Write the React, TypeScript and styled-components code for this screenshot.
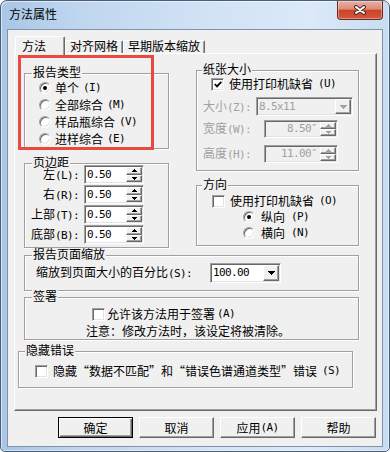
import React from 'react'
import styled, { createGlobalStyle } from 'styled-components'

const GlobalStyle = createGlobalStyle`
  html, body {
    margin: 0;
    padding: 0;
    background: #fff;
  }
  body {
    font-family: 'Noto Sans CJK SC', sans-serif;
    font-size: 12px;
    line-height: 14px;
    color: #000;
  }
  *, *::before, *::after {
    box-sizing: border-box;
  }
`

// ascii runs are set in a narrow mono face, like the half-width glyphs of SimSun
const Latin = styled.span`
  font-family: 'DejaVu Sans Mono', 'Liberation Mono', monospace;
  font-size: 11px;
  letter-spacing: -0.62px;
`

const LATIN_RUN = /([\x20-\x7E\u2033]+)/

function Txt({ s }: { s: string }) {
  return (
    <>
      {s.split(LATIN_RUN).map((part, i) =>
        part === '' ? null : i % 2 ? (
          <Latin key={i}>{part}</Latin>
        ) : (
          <React.Fragment key={i}>{part}</React.Fragment>
        )
      )}
    </>
  )
}

const Window = styled.div`
  width: 390px;
  height: 452px;
  display: flex;
  flex-direction: column;
  border: 1px solid #4a5e77;
  border-radius: 7px 7px 5px 5px;
  background: linear-gradient(90deg, #a9c6e6 0%, #bfd6ef 20%, #d2e3f5 55%, #dbe9f8 80%, #c8dcf1 100%);
  box-shadow: inset 1px 1px 0 rgba(255, 255, 255, 0.55), inset -1px -1px 0 rgba(255, 255, 255, 0.45);
  overflow: hidden;
`

const TitleBar = styled.div`
  height: 28px;
  display: flex;
  align-items: flex-start;
  padding-left: 8px;
`

const Title = styled.div`
  margin-top: 6px;
`

const CloseButton = styled.div`
  margin-left: auto;
  margin-right: 6px;
  width: 46px;
  height: 19px;
  border: 1px solid #6b2a21;
  border-top: 0;
  border-radius: 0 0 4px 4px;
  background: linear-gradient(180deg, #eab0a2 0%, #de8a76 45%, #c9442a 52%, #d3593b 100%);
  box-shadow: inset 0 0 0 1px rgba(255, 255, 255, 0.35);
  display: flex;
  align-items: center;
  justify-content: center;
`

const Client = styled.div`
  flex: 1;
  margin: 0 6px 4px;
  border: 1px solid #7f93ad;
  background: #f0f0f0;
  padding: 6px 5px 0 6px;
  display: flex;
  flex-direction: column;
`

const TabStrip = styled.div`
  display: flex;
  align-items: flex-end;
  height: 17px;
  padding-left: 1px;
  position: relative;
  z-index: 1;
`

const Tab = styled.div<{ $active?: boolean }>`
  height: ${p => (p.$active ? 19 : 13)}px;
  margin-bottom: ${p => (p.$active ? -2 : 0)}px;
  min-width: ${p => (p.$active ? 50 : 0)}px;
  padding: 0 ${p => (p.$active ? 6 : 4)}px;
  border: 1px solid;
  border-color: #fff #696969 transparent #fff;
  border-bottom: 0;
  border-radius: 2px 2px 0 0;
  box-shadow: inset -1px 0 0 #a0a0a0;
  background: #f0f0f0;
  display: flex;
  align-items: ${p => (p.$active ? 'center' : 'flex-end')};
  white-space: nowrap;
`

const Panel = styled.div`
  position: relative;
  height: 358px;
  border: 1px solid;
  border-color: #fff #696969 #696969 #fff;
  box-shadow: inset -1px -1px 0 #a0a0a0;
  display: flex;
  flex-direction: column;
  align-items: flex-start;
`

const Highlight = styled.div`
  position: absolute;
  left: 3px;
  top: 1px;
  width: 136px;
  height: 95px;
  border: 3px solid #e84a40;
  pointer-events: none;
`

const TopRow = styled.div`
  display: flex;
  gap: 27px;
  padding-left: 9px;
`

const Column = styled.div<{ $top: number; $w: number }>`
  display: flex;
  flex-direction: column;
  gap: 14px;
  width: ${p => p.$w}px;
  padding-top: ${p => p.$top}px;
`

const Group = styled.div`
  position: relative;
  flex: none;
  border: 1px solid #a0a0a0;
  box-shadow: inset 1px 1px 0 #fff, 1px 1px 0 #fff;
  display: flex;
  flex-direction: column;
  align-items: flex-start;
`

const Legend = styled.span<{ $x: number }>`
  position: absolute;
  top: -8px;
  left: ${p => p.$x}px;
  padding: 0 1px;
  line-height: 11px;
  background: #f0f0f0;
  white-space: nowrap;
`

const TypeGroup = styled(Group)`
  height: 76px;
  padding: 5px 0 0 14px;
`

const MarginGroup = styled(Group)`
  height: 85px;
`

const PaperGroup = styled(Group)`
  height: 101px;
`

const DirGroup = styled(Group)`
  height: 61px;
`

const WideGroup = styled(Group)<{ $h: number; $mt: number; $ml: number }>`
  width: 335px;
  height: ${p => p.$h}px;
  margin: ${p => p.$mt}px 0 0 ${p => p.$ml}px;
`

const Line = styled.div<{ $h?: number; $pl?: number; $mt?: number; $gap?: number }>`
  display: flex;
  align-items: center;
  height: ${p => p.$h ?? 14}px;
  padding-left: ${p => p.$pl ?? 0}px;
  margin-top: ${p => p.$mt ?? 0}px;
  gap: ${p => p.$gap ?? 0}px;
  white-space: nowrap;
`

const FieldLabel = styled.span<{ $w: number; $right?: boolean; $disabled?: boolean }>`
  width: ${p => p.$w}px;
  flex: none;
  line-height: 12px;
  text-align: ${p => (p.$right ? 'right' : 'left')};
  padding-right: ${p => (p.$right ? 5 : 0)}px;
  color: ${p => (p.$disabled ? '#a0a0a0' : '#000')};
`

const RadioDot = styled.span<{ $on?: boolean }>`
  flex: none;
  width: 12px;
  height: 12px;
  border-radius: 50%;
  background: #fff;
  border: 1px solid;
  border-color: #a0a0a0 #fff #fff #a0a0a0;
  box-shadow: inset 1px 1px 0 #696969, inset -1px -1px 0 #e3e3e3;
  display: flex;
  align-items: center;
  justify-content: center;
  &::after {
    content: '';
    display: ${p => (p.$on ? 'block' : 'none')};
    width: 4px;
    height: 4px;
    border-radius: 50%;
    background: #000;
  }
`

const CheckBox = styled.span`
  flex: none;
  width: 13px;
  height: 13px;
  background: #fff;
  border: 1px solid;
  border-color: #a0a0a0 #fff #fff #a0a0a0;
  box-shadow: inset 1px 1px 0 #696969, inset -1px -1px 0 #e3e3e3;
  display: flex;
  align-items: center;
  justify-content: center;
`

const Sunken = styled.div<{ $w: number; $h: number; $disabled?: boolean }>`
  flex: none;
  display: flex;
  width: ${p => p.$w}px;
  height: ${p => p.$h}px;
  padding: 1px;
  border: 1px solid;
  border-color: #a0a0a0 #fff #fff #a0a0a0;
  box-shadow: inset 1px 1px 0 #696969, inset -1px -1px 0 #e3e3e3;
  background: ${p => (p.$disabled ? '#f0f0f0' : '#fff')};
`

const FieldText = styled.div<{ $right?: boolean; $disabled?: boolean }>`
  flex: 1;
  display: flex;
  align-items: center;
  justify-content: ${p => (p.$right ? 'flex-end' : 'flex-start')};
  padding: 0 ${p => (p.$right ? 3 : 0)}px 0 1px;
  color: ${p => (p.$disabled ? '#a0a0a0' : '#000')};
`

const Spinner = styled.div`
  width: 16px;
  display: flex;
  flex-direction: column;
`

const Raised = styled.div`
  flex: 1;
  display: flex;
  align-items: center;
  justify-content: center;
  background: #f0f0f0;
  border: 1px solid;
  border-color: #fff #696969 #696969 #fff;
  box-shadow: inset -1px -1px 0 #a0a0a0;
`

const DropButton = styled(Raised)`
  flex: none;
  width: 16px;
`

const Arrow = ({ up, w, h, color }: { up?: boolean; w: number; h: number; color: string }) => (
  <svg width={w} height={h} viewBox={`0 0 ${w} ${h}`} shapeRendering='crispEdges'>
    <polygon points={up ? `0,${h} ${w},${h} ${w / 2},0` : `0,0 ${w},0 ${w / 2},${h}`} fill={color} />
  </svg>
)

function SpinBox({ value, w, h, disabled }: { value: string; w: number; h: number; disabled?: boolean }) {
  const c = disabled ? '#a0a0a0' : '#000'
  return (
    <Sunken $w={w} $h={h} $disabled={disabled}>
      <FieldText $right={disabled} $disabled={disabled}>
        <Txt s={value} />
      </FieldText>
      <Spinner>
        <Raised>
          <Arrow up w={5} h={3} color={c} />
        </Raised>
        <Raised>
          <Arrow w={5} h={3} color={c} />
        </Raised>
      </Spinner>
    </Sunken>
  )
}

function Combo({ value, w, h, disabled }: { value: string; w: number; h: number; disabled?: boolean }) {
  return (
    <Sunken $w={w} $h={h} $disabled={disabled}>
      <FieldText $disabled={disabled}>
        <Txt s={value} />
      </FieldText>
      <DropButton>
        <Arrow w={7} h={4} color={disabled ? '#a0a0a0' : '#000'} />
      </DropButton>
    </Sunken>
  )
}

const Tick = () => (
  <svg width='8' height='7' viewBox='0 0 8 7'>
    <path d='M0.8 3 L3 5.4 L7.3 0.8' stroke='#000' strokeWidth='1.8' fill='none' />
  </svg>
)

const ButtonRow = styled.div`
  display: flex;
  justify-content: flex-end;
  gap: 6px;
  margin-top: 6px;
  padding-right: 1px;
`

const Button = styled.div<{ $default?: boolean }>`
  width: 75px;
  height: 21px;
  display: flex;
  align-items: center;
  justify-content: center;
  background: #f0f0f0;
  border: 1px solid;
  border-color: ${p => (p.$default ? '#000' : '#fff #696969 #696969 #fff')};
  box-shadow: ${p =>
    p.$default
      ? 'inset 1px 1px 0 #fff, inset -1px -1px 0 #696969, inset -2px -2px 0 #a0a0a0'
      : 'inset -1px -1px 0 #a0a0a0'};
`

const margins = ['左(L):', '右(R):', '上部(T):', '底部(B):']
const reportTypes = ['单个(I)', '全部综合(M)', '样品瓶综合(V)', '进样综合(E)']

export default function App() {
  return (
    <>
      <GlobalStyle />
      <Window>
        <TitleBar>
          <Title>方法属性</Title>
          <CloseButton>
            <svg width='14' height='10' viewBox='0 0 14 10'>
              <path d='M3 2 L11 8 M11 2 L3 8' stroke='#4a2a26' strokeWidth='4' strokeLinecap='round' />
              <path d='M3 2 L11 8 M11 2 L3 8' stroke='#fff' strokeWidth='2' strokeLinecap='round' />
            </svg>
          </CloseButton>
        </TitleBar>
        <Client>
          <TabStrip>
            <Tab $active>方法</Tab>
            <Tab>对齐网格</Tab>
            <Tab>早期版本缩放</Tab>
          </TabStrip>
          <Panel>
            <TopRow>
              <Column $top={19} $w={145}>
                <TypeGroup>
                  <Legend $x={7}>报告类型</Legend>
                  {reportTypes.map((t, i) => (
                    <Line key={t} $h={17} $gap={4}>
                      <RadioDot $on={i === 0} />
                      <Txt s={t} />
                    </Line>
                  ))}
                </TypeGroup>
                <MarginGroup>
                  <Legend $x={7}>页边距</Legend>
                  {margins.map(m => (
                    <Line key={m} $h={19} $mt={1}>
                      <FieldLabel $w={59} $right>
                        <Txt s={m} />
                      </FieldLabel>
                      <SpinBox value='0.50' w={60} h={19} />
                    </Line>
                  ))}
                </MarginGroup>
              </Column>
              <Column $top={16} $w={163}>
                <PaperGroup>
                  <Legend $x={5}>纸张大小</Legend>
                  <Line $mt={6} $pl={14} $gap={5}>
                    <CheckBox>
                      <Tick />
                    </CheckBox>
                    <Txt s='使用打印机缺省(U)' />
                  </Line>
                  <Line $h={19} $mt={6} $pl={6}>
                    <FieldLabel $w={53} $disabled>
                      <Txt s='大小(Z):' />
                    </FieldLabel>
                    <Combo value='8.5x11' w={97} h={19} disabled />
                  </Line>
                  <Line $h={18} $mt={4} $pl={6}>
                    <FieldLabel $w={61} $disabled>
                      <Txt s='宽度(W):' />
                    </FieldLabel>
                    <SpinBox value='8.50″' w={74} h={18} disabled />
                  </Line>
                  <Line $h={18} $mt={7} $pl={6}>
                    <FieldLabel $w={61} $disabled>
                      <Txt s='高度(H):' />
                    </FieldLabel>
                    <SpinBox value='11.00″' w={74} h={18} disabled />
                  </Line>
                </PaperGroup>
                <DirGroup>
                  <Legend $x={5}>方向</Legend>
                  <Line $mt={8} $pl={15} $gap={5}>
                    <CheckBox />
                    <Txt s='使用打印机缺省(O)' />
                  </Line>
                  <Line $h={16} $mt={1} $pl={46} $gap={6}>
                    <RadioDot $on />
                    <Txt s='纵向(P)' />
                  </Line>
                  <Line $h={16} $pl={46} $gap={6}>
                    <RadioDot />
                    <Txt s='横向(N)' />
                  </Line>
                </DirGroup>
              </Column>
            </TopRow>

            <WideGroup $h={36} $mt={7} $ml={9}>
              <Legend $x={7}>报告页面缩放</Legend>
              <Line $h={20} $mt={7} $pl={11}>
                <FieldLabel $w={174}>
                  <Txt s='缩放到页面大小的百分比(S):' />
                </FieldLabel>
                <Combo value='100.00' w={71} h={20} />
              </Line>
            </WideGroup>

            <WideGroup $h={43} $mt={6} $ml={9}>
              <Legend $x={7}>签署</Legend>
              <Line $mt={9} $pl={67} $gap={2}>
                <CheckBox />
                <Txt s='允许该方法用于签署(A)' />
              </Line>
              <Line $mt={3} $pl={61}>
                注意：修改方法时，该设定将被清除。
              </Line>
            </WideGroup>

            <WideGroup $h={37} $mt={11} $ml={3}>
              <Legend $x={6}>隐藏错误</Legend>
              <Line $mt={12} $pl={16} $gap={5}>
                <CheckBox />
                <Txt s='隐藏“数据不匹配”和“错误色谱通道类型”错误(S)' />
              </Line>
            </WideGroup>

            <Highlight />
          </Panel>
          <ButtonRow>
            <Button $default>确定</Button>
            <Button>取消</Button>
            <Button>
              <Txt s='应用(A)' />
            </Button>
            <Button>帮助</Button>
          </ButtonRow>
        </Client>
      </Window>
    </>
  )
}
